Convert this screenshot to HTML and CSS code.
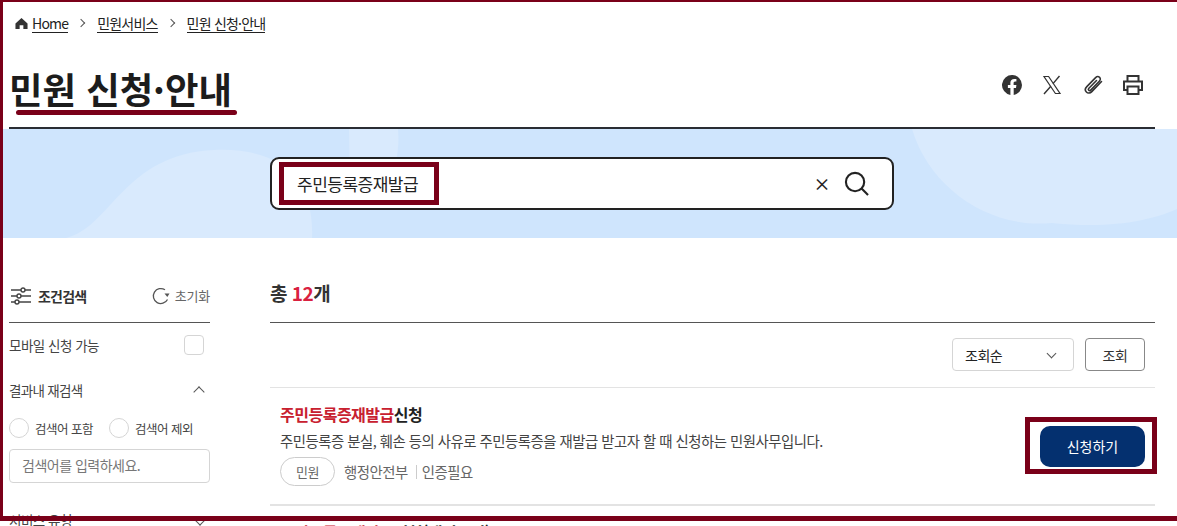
FILE: index.html
```html
<!DOCTYPE html>
<html lang="ko">
<head>
  <meta charset="UTF-8">
  <title>민원 신청·안내</title>
  <link rel="stylesheet" href="styles.css">
</head>
<body>
  <div class="page">
    <nav class="crumbs">
      <svg class="home-icon" viewBox="0 0 14 14"><path d="M7 1 L13.5 7 V13 H9 V9 H5 V13 H.5 V7 Z" fill="#333"/></svg>
      <a class="crumb">Home</a>
      <span class="crumb-sep"></span>
      <a class="crumb">민원서비스</a>
      <span class="crumb-sep"></span>
      <a class="crumb">민원 신청·안내</a>
    </nav>

    <header class="title-row">
      <h1 class="page-title">민원 신청·안내</h1>
      <div class="share">
        <svg viewBox="0 0 24 24" class="share-icon"><path fill="#333" d="M22 12a10 10 0 1 0-11.6 9.9v-7H7.900V12h2.500V9.800c0-2.500 1.500-3.900 3.800-3.900 1.100 0 2.200.2 2.200.2v2.500h-1.200c-1.200 0-1.600.8-1.600 1.600V12h2.800l-.4 2.900h-2.300v7A10 10 0 0 0 22 12z"/></svg>
        <svg viewBox="0 0 24 24" class="share-icon"><path fill="none" stroke="#333" stroke-width="1.2" d="M4 3.500h4.600l11.400 17h-4.600z"/><path fill="none" stroke="#333" stroke-width="1.4" d="M19.500 3 13 10.600M10.800 13.200 4 21"/></svg>
        <svg viewBox="0 0 24 24" class="share-icon"><path fill="none" stroke="#333" stroke-width="1.6" stroke-linecap="round" d="M20.500 8.500 10.800 18.600c-1.700 1.700-4 1.800-5.400.4s-1.300-3.700.4-5.400l8.800-9c1.200-1.200 2.900-1.300 4-.3s.9 2.800-.3 4l-8.600 8.800c-.6.6-1.500.7-2 .2s-.4-1.400.2-2l7.600-7.800"/></svg>
        <svg viewBox="0 0 24 24" class="share-icon"><path fill="none" stroke="#333" stroke-width="2" d="M6.500 8V3h11v5M6.500 17H3V8.500h18V17h-3.500M6.500 13.500h11V21h-11z"/></svg>
      </div>
    </header>

    <section class="hero">
      <svg class="hero-waves" viewBox="0 0 1177 110">
        <path d="M60 110C110 105 120 25 214 21C280 18 315 50 312 110Z"/>
        <path d="M349 0H398C400 20 395 40 390 55H350Z"/>
        <path d="M912 0C930 60 990 100 1052 94C1110 100 1150 92 1177 80V0Z"/>
      </svg>
      <div class="search-box">
        <span class="search-text marked">주민등록증재발급</span>
        <span class="search-clear">×</span>
        <svg class="search-icon" viewBox="0 0 26 26"><circle cx="11.500" cy="11.500" r="9.500" fill="none" stroke="#222" stroke-width="2.200"/><path d="M18 18l7 7" stroke="#222" stroke-width="2.200"/></svg>
      </div>
    </section>

    <div class="content">
      <aside class="filters">
        <div class="filter-head">
          <svg class="slider-icon" viewBox="0 0 20 18"><g stroke="#444" stroke-width="1.400" fill="#fff"><path d="M0 3h20M0 9h20M0 15h20"/><circle cx="12" cy="3" r="2"/><circle cx="8" cy="9" r="2"/><circle cx="6" cy="15" r="2"/></g></svg>
          <strong class="filter-title">조건검색</strong>
          <svg class="reset-icon" viewBox="0 0 18 18"><path d="M15.500 12.500A7.500 7.500 0 1 1 13 2.800" fill="none" stroke="#555" stroke-width="1.300"/><path d="M12.500 6.500l5 0-2.200 3.500z" fill="#555"/></svg>
          <span class="reset-label">초기화</span>
        </div>
        <div class="filter-row mobile-row">
          <span>모바일 신청 가능</span>
          <span class="check"></span>
        </div>
        <div class="filter-row result-row">
          <span>결과내 재검색</span>
          <span class="chevron chevron-up"></span>
        </div>
        <div class="radios">
          <label class="radio"><span class="radio-dot"></span>검색어 포함</label>
          <label class="radio"><span class="radio-dot"></span>검색어 제외</label>
        </div>
        <div class="keyword">검색어를 입력하세요.</div>
        <div class="filter-row service-row">
          <span>서비스 유형</span>
          <span class="chevron"></span>
        </div>
      </aside>

      <main class="results">
        <h2 class="total">총 <em>12</em>개</h2>
        <div class="sort-bar">
          <div class="sort-select">조회순<span class="chevron chevron-small"></span></div>
          <button class="sort-btn">조회</button>
        </div>

        <article class="result-item">
          <div class="result-body">
            <h3 class="result-title"><em>주민등록증재발급</em>신청</h3>
            <p class="result-desc">주민등록증 분실, 훼손 등의 사유로 주민등록증을 재발급 받고자 할 때 신청하는 민원사무입니다.</p>
            <div class="result-meta">
              <span class="pill">민원</span>
              <span>행정안전부</span>
              <span class="meta-line">인증필요</span>
            </div>
          </div>
          <div class="apply-mark marked">
            <button class="apply-btn">신청하기</button>
          </div>
        </article>

        <article class="result-item">
          <div class="result-body">
            <h3 class="result-title"><em>주민등록증재발급</em>신청(재외국민)</h3>
          </div>
        </article>
      </main>
    </div>
  </div>

  <div class="frame"></div>
</body>
</html>
```

FILE: styles.css
```css
* {
  box-sizing: border-box;
}

html, body {
  height: 526px;
  overflow: hidden;
}

body {
  margin: 0;
  font-family: "Noto Sans CJK KR", "Noto Sans", sans-serif;
  color: #222;
  background: #fff;
  letter-spacing: -0.5px;
}

em {
  font-style: normal;
}

.page {
  padding: 0 22px 0 9px;
}

/* breadcrumb */
.crumbs {
  display: flex;
  align-items: center;
  height: 46px;
  padding: 0 0 0 6px;
  font-size: 14px;
  letter-spacing: -0.8px;
}

.home-icon {
  width: 13px;
  height: 13px;
  margin-right: 4px;
}

.crumb {
  border-bottom: 1px solid #222;
  line-height: 18px;
}

.crumb-sep {
  width: 6px;
  height: 6px;
  margin: 0 13px 0 10px;
  border-top: 1px solid #555;
  border-right: 1px solid #555;
  transform: rotate(45deg);
}

/* title */
.title-row {
  display: flex;
  justify-content: space-between;
  height: 83px;
  border-bottom: 2px solid #2a2d34;
}

.page-title {
  position: relative;
  margin: 0;
  height: 70px;
  padding-top: 18px;
  font-size: 36.400px;
  line-height: 48px;
  font-weight: 700;
  letter-spacing: 0;
  color: #1c1c1c;
}

.page-title::after {
  content: "";
  position: absolute;
  left: 7px;
  right: -5px;
  top: 64px;
  height: 5px;
  border-radius: 3px;
  background: #7a0019;
}

.share {
  display: flex;
  gap: 16.500px;
  padding: 27px 0 0;
  margin-right: 10px;
}

.share-icon {
  width: 24px;
  height: 24px;
}

/* search band */
.hero {
  position: relative;
  margin: 0 -22px 0 -9px;
  height: 109px;
  padding: 28px 0 0 270px;
  overflow: hidden;
  background: #cfe5fd;
}

.hero-waves {
  position: absolute;
  left: 0;
  top: 0;
  width: 1177px;
  height: 110px;
  fill: #d9eafd;
}

.search-box {
  position: relative;
  display: flex;
  align-items: center;
  width: 624px;
  height: 53px;
  padding: 0 23px 0 12px;
  border: 2px solid #222;
  border-radius: 9px;
  background: #fff;
}

.search-text {
  padding: 0 16px 0 13px;
  font-size: 17px;
  line-height: 33px;
  white-space: nowrap;
  letter-spacing: -0.5px;
}

.search-clear {
  margin-left: auto;
  margin-right: 14px;
  font-size: 17px;
  line-height: 22px;
  font-weight: 500;
}

.search-icon {
  width: 25px;
  height: 25px;
}

.marked {
  outline: 5px solid #7a0019;
}

/* layout below the band */
.content {
  display: grid;
  grid-template-columns: 201px 1fr;
  column-gap: 60px;
}

/* filters */
.filters {
  padding-top: 45px;
  font-size: 13.500px;
  color: #444;
}

.filter-head {
  display: flex;
  align-items: center;
  height: 40px;
  border-bottom: 1px solid #555;
  padding-bottom: 14px;
}

.slider-icon {
  width: 20px;
  height: 18px;
  margin: 0 7px 0 2px;
}

.filter-title {
  font-size: 14px;
  letter-spacing: -0.8px;
  color: #333;
}

.reset-icon {
  width: 18px;
  height: 18px;
  margin: 0 5px 0 auto;
}

.reset-label {
  font-size: 13px;
  letter-spacing: -0.2px;
  color: #666;
}

.filter-row {
  display: flex;
  align-items: center;
  justify-content: space-between;
}

.mobile-row {
  height: 45px;
  padding-bottom: 2px;
}

.check {
  width: 20px;
  height: 20px;
  margin-right: 6px;
  border: 1px solid #d5d5d5;
  border-radius: 4px;
}

.result-row {
  height: 43px;
  padding-right: 7px;
  margin-bottom: 3px;
  letter-spacing: -0.7px;
}

.chevron {
  width: 8px;
  height: 8px;
  border-right: 1px solid #555;
  border-bottom: 1px solid #555;
  transform: rotate(45deg);
}

.chevron-up {
  transform: rotate(225deg);
  margin-top: 5px;
}

.radios {
  display: flex;
  gap: 16px;
  margin-top: 7px;
  font-size: 12.500px;
}

.radio {
  display: flex;
  align-items: center;
  gap: 6px;
}

.radio-dot {
  width: 20px;
  height: 20px;
  border: 1px solid #d5d5d5;
  border-radius: 50%;
}

.keyword {
  height: 34px;
  margin-top: 11px;
  padding-left: 12px;
  border: 1px solid #d5d5d5;
  border-radius: 4px;
  font-size: 14px;
  line-height: 30px;
  color: #777;
}

.service-row {
  height: 26px;
  margin-top: 24px;
  padding-right: 6px;
}

/* results */
.total {
  margin: 0;
  height: 85px;
  padding-top: 42px;
  border-bottom: 1px solid #555;
  font-size: 19px;
  line-height: 26px;
  font-weight: 700;
  color: #333;
}

.total em {
  color: #d9213f;
}

.sort-bar {
  display: flex;
  justify-content: flex-end;
  gap: 11px;
  height: 65px;
  padding: 15px 10px 0 0;
  border-bottom: 1px solid #e3e3e3;
  font-size: 14px;
}

.sort-select {
  position: relative;
  display: flex;
  align-items: center;
  justify-content: space-between;
  width: 122px;
  height: 33px;
  padding: 0 18px 0 12px;
  border: 1px solid #d5d5d5;
  border-radius: 4px;
}

.chevron-small {
  width: 7px;
  height: 7px;
  margin-top: -3px;
}

.sort-btn {
  width: 60px;
  height: 33px;
  padding: 0;
  border: 1px solid #888;
  border-radius: 4px;
  background: #fff;
  color: #333;
  font: inherit;
  letter-spacing: inherit;
}

.result-item {
  display: flex;
  justify-content: space-between;
  align-items: flex-start;
  height: 118px;
  padding: 16px 10px 0;
  border-bottom: 2px solid #e3e3e3;
}

.result-title {
  margin: 0;
  font-size: 16px;
  line-height: 20px;
  font-weight: 700;
  color: #222;
}

.result-title em {
  color: #c8202f;
}

.result-desc {
  margin: 7px 0 0;
  font-size: 14.400px;
  line-height: 20px;
  color: #444;
}

.result-meta {
  display: flex;
  align-items: center;
  gap: 9px;
  margin-top: 6px;
  font-size: 14.400px;
  color: #666;
}

.pill {
  width: 55px;
  height: 29px;
  border: 1px solid #ccc;
  border-radius: 15px;
  text-align: center;
  font-size: 13px;
  line-height: 27px;
}

.meta-line {
  margin-left: -1px;
  padding-left: 5px;
  border-left: 1px solid #ccc;
  line-height: 14px;
}

.apply-mark {
  padding: 4px 7px 2px 10px;
  margin: 18px -7px 0 0;
  line-height: 0;
}

.apply-btn {
  width: 105px;
  height: 41px;
  padding: 0;
  border: 0;
  border-radius: 10px;
  background: #04306f;
  color: #fff;
  font: inherit;
  font-size: 14px;
  line-height: 41px;
}

/* red screenshot annotation over the whole page */
.frame {
  position: absolute;
  left: 0;
  top: 0;
  width: 1177px;
  height: 521px;
  border: solid #7a0019;
  border-width: 2px 0 5px 3px;
  pointer-events: none;
}
```
